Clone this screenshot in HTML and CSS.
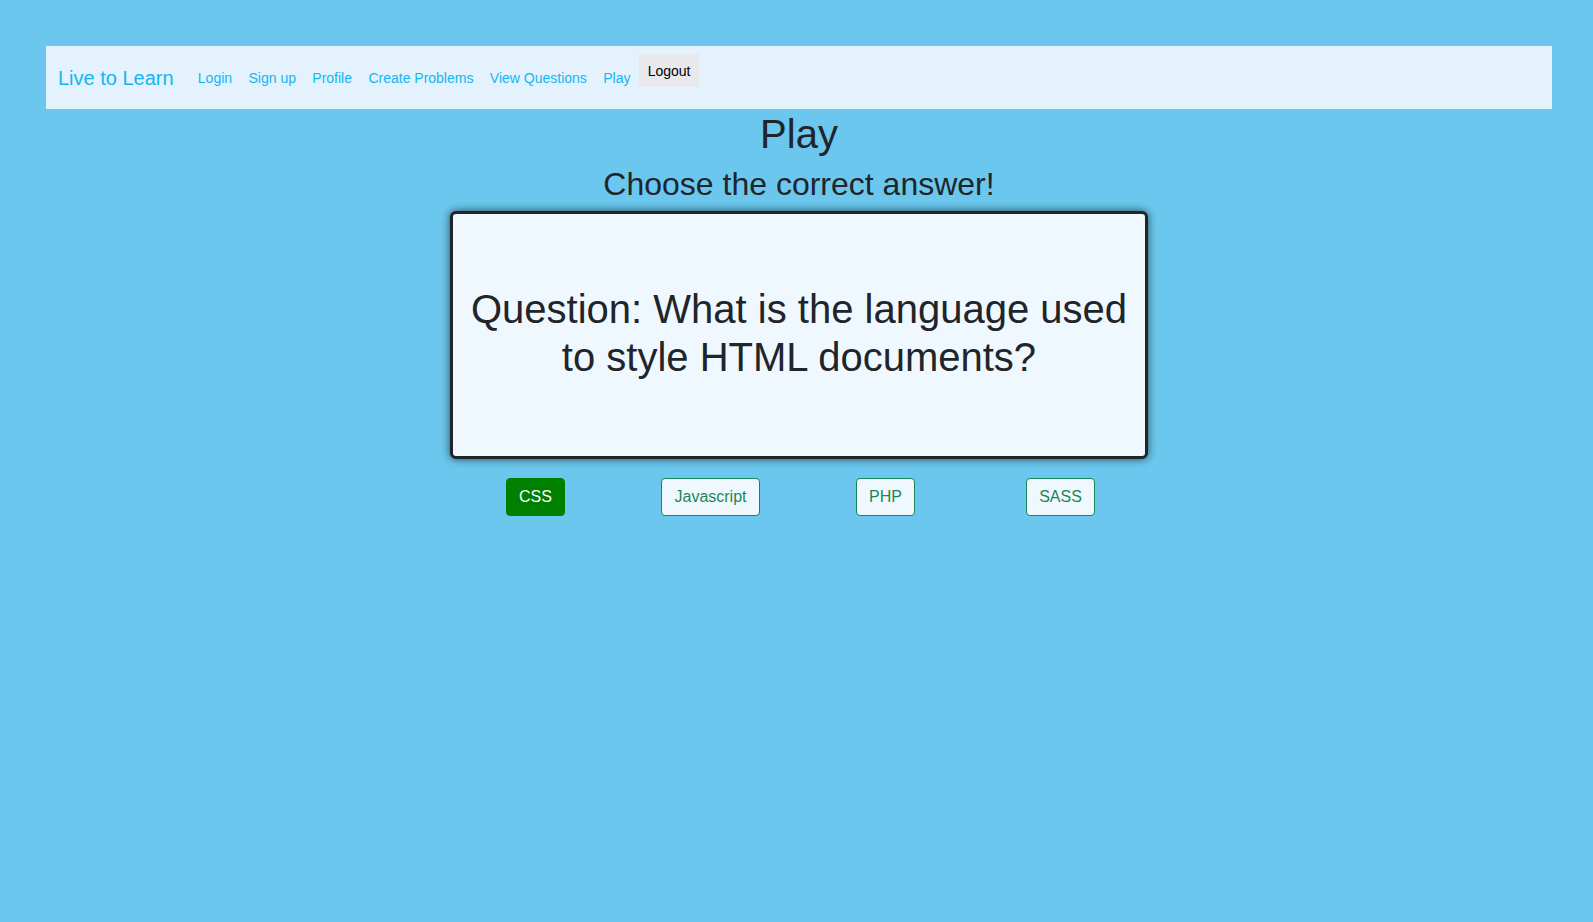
FILE: index.html
```html
<!DOCTYPE html>
<html lang="en">
<head>
<meta charset="utf-8">
<title>Live to Learn - Play</title>
<link rel="stylesheet" href="styles.css">
</head>
<body>
<div class="page">
  <nav class="navbar">
    <a class="brand" href="#">Live to Learn</a>
    <ul class="nav-links">
      <li><a class="nav-link" href="#">Login</a></li>
      <li><a class="nav-link" href="#">Sign up</a></li>
      <li><a class="nav-link" href="#">Profile</a></li>
      <li><a class="nav-link" href="#">Create Problems</a></li>
      <li><a class="nav-link" href="#">View Questions</a></li>
      <li><a class="nav-link" href="#">Play</a></li>
    </ul>
    <button class="logout" type="button">Logout</button>
  </nav>
  <main class="play">
    <h1 class="title">Play</h1>
    <h2 class="subtitle">Choose the correct answer!</h2>
    <div class="card">
      <h1 class="question">Question: What is the language used to style HTML documents?</h1>
    </div>
    <div class="answers">
      <div class="answer-col"><button class="btn btn-selected" type="button">CSS</button></div>
      <div class="answer-col"><button class="btn btn-outline" type="button">Javascript</button></div>
      <div class="answer-col"><button class="btn btn-outline" type="button">PHP</button></div>
      <div class="answer-col"><button class="btn btn-outline" type="button">SASS</button></div>
    </div>
  </main>
</div>
</body>
</html>
```

FILE: styles.css
```css
* {
  box-sizing: border-box;
}

html, body {
  margin: 0;
  padding: 0;
}

body {
  background: #6bc7ed;
  font-family: "Liberation Sans", Arial, sans-serif;
  color: #212529;
  min-height: 922px;
}

.page {
  padding: 46px 41px 0 46px;
}

.navbar {
  display: flex;
  align-items: center;
  height: 63px;
  padding: 0 12px;
  background: #e3f2fd;
}

.brand {
  font-size: 20px;
  line-height: 30px;
  color: #12b6f3;
  text-decoration: none;
  margin-right: 16px;
}

.nav-links {
  display: flex;
  list-style: none;
  margin: 0;
  padding: 0;
}

.nav-link {
  display: block;
  padding: 2px 8.2px 0;
  font-size: 14px;
  line-height: 21px;
  color: #12b6f3;
  text-decoration: none;
}

.logout {
  align-self: flex-start;
  margin-top: 8px;
  padding: 9px 9px 7px;
  border: none;
  border-radius: 0;
  background: #e9e9ed;
  color: #000;
  font-family: "Liberation Sans", Arial, sans-serif;
  font-size: 14px;
  line-height: 17px;
}

.play {
  display: flex;
  flex-direction: column;
  align-items: center;
}

.title {
  margin: 1px 0 7px;
  font-size: 40px;
  line-height: 48px;
  font-weight: 400;
}

.subtitle {
  margin: 0 0 8px;
  font-size: 32px;
  line-height: 38.4px;
  font-weight: 400;
}

.card {
  width: 698px;
  height: 248px;
  display: flex;
  align-items: center;
  justify-content: center;
  padding: 0 16px;
  background: #f0f8ff;
  border: 3px solid #212529;
  border-radius: 6px;
  box-shadow: 0 0 8px rgba(0, 0, 0, 0.65);
}

.question {
  margin: 0 0 5px;
  font-size: 40px;
  line-height: 48px;
  font-weight: 400;
  text-align: center;
}

.answers {
  display: flex;
  width: 700px;
  margin-top: 18.6px;
  transform: translateX(-1px);
}

.answer-col {
  flex: 1 1 0;
  display: flex;
  justify-content: center;
}

.btn {
  padding: 6px 12px;
  font-family: "Liberation Sans", Arial, sans-serif;
  font-size: 16px;
  line-height: 24px;
  border-radius: 4px;
  border: 1px solid #198754;
  cursor: pointer;
}

.btn-selected {
  background: #008000;
  border-color: #008000;
  color: #fff;
}

.btn-outline {
  background: #f0f8ff;
  color: #198754;
}
```
